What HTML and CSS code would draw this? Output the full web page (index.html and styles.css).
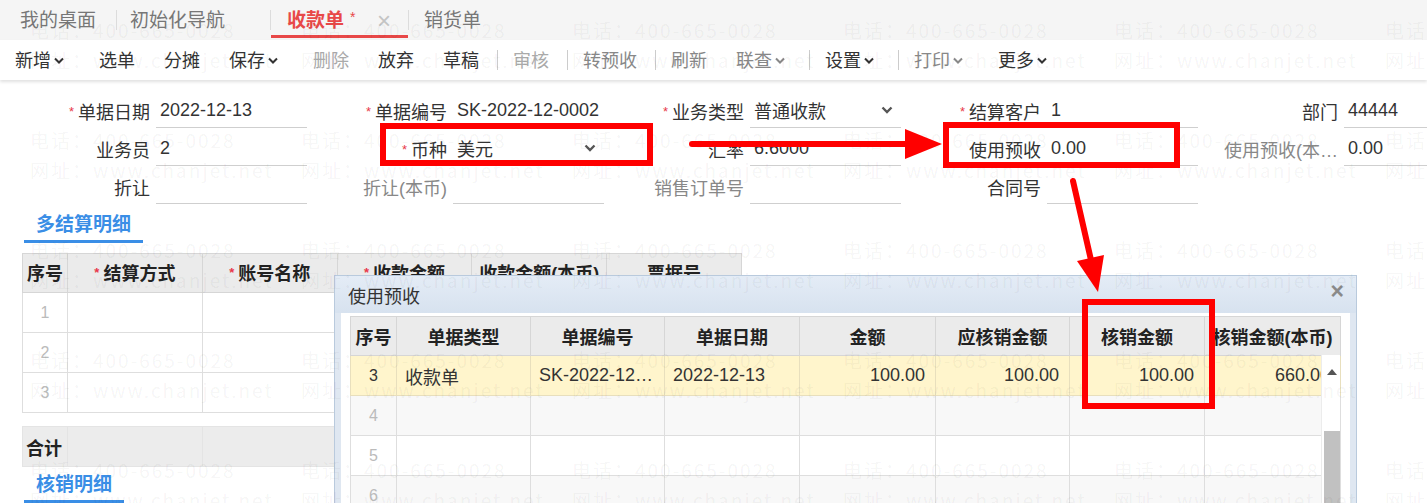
FILE: index.html
```html
<!DOCTYPE html>
<html lang="zh-CN">
<head>
    <meta charset="UTF-8">
    <title>收款单</title>
    <link rel="stylesheet" href="styles.css">
</head>
<body>
<div class="page">
    <div class="tabs">
        <span class="tab tab-desk">我的桌面</span>
        <span class="tab-sep"></span>
        <span class="tab tab-guide">初始化导航</span>
        <span class="tab-sep"></span>
        <span class="tab tab-active">收款单<i class="tab-star">*</i><span class="tab-close">×</span></span>
        <span class="tab-sep"></span>
        <span class="tab tab-sale">销货单</span>
    </div>

    <div class="toolbar">
        <span class="tb dd">新增<svg class="chev" viewBox="0 0 10 7"><path d="M1 1.5L5 5.5L9 1.5"/></svg></span>
        <span class="tb">选单</span>
        <span class="tb">分摊</span>
        <span class="tb dd">保存<svg class="chev" viewBox="0 0 10 7"><path d="M1 1.5L5 5.5L9 1.5"/></svg></span>
        <span class="tb off">删除</span>
        <span class="tb">放弃</span>
        <span class="tb">草稿</span>
        <span class="tb-sep"></span>
        <span class="tb off">审核</span>
        <span class="tb-sep"></span>
        <span class="tb dim">转预收</span>
        <span class="tb-sep"></span>
        <span class="tb dim">刷新</span>
        <span class="tb dd dim">联查<svg class="chev" viewBox="0 0 10 7"><path d="M1 1.5L5 5.5L9 1.5"/></svg></span>
        <span class="tb-sep"></span>
        <span class="tb dd">设置<svg class="chev" viewBox="0 0 10 7"><path d="M1 1.5L5 5.5L9 1.5"/></svg></span>
        <span class="tb-sep"></span>
        <span class="tb dd dim">打印<svg class="chev" viewBox="0 0 10 7"><path d="M1 1.5L5 5.5L9 1.5"/></svg></span>
        <span class="tb dd">更多<svg class="chev" viewBox="0 0 10 7"><path d="M1 1.5L5 5.5L9 1.5"/></svg></span>
    </div>

    <div class="form">
        <div class="fi"><label><span class="req">*</span>单据日期</label><div class="val">2022-12-13</div></div>
        <div class="fi"><label><span class="req">*</span>单据编号</label><div class="val">SK-2022-12-0002</div></div>
        <div class="fi"><label><span class="req">*</span>业务类型</label><div class="val"><span class="txt">普通收款</span><svg class="sel" viewBox="0 0 12 8"><path d="M1.5 1.5L6 6L10.5 1.5"/></svg></div></div>
        <div class="fi"><label><span class="req">*</span>结算客户</label><div class="val">1</div></div>
        <div class="fi"><label>部门</label><div class="val">44444</div></div>

        <div class="fi"><label>业务员</label><div class="val">2</div></div>
        <div class="fi"><label><span class="req">*</span>币种</label><div class="val"><span class="txt">美元</span><svg class="sel" viewBox="0 0 12 8"><path d="M1.5 1.5L6 6L10.5 1.5"/></svg></div></div>
        <div class="fi"><label>汇率</label><div class="val">6.6000</div></div>
        <div class="fi"><label>使用预收</label><div class="val">0.00</div></div>
        <div class="fi"><label class="muted">使用预收(本…</label><div class="val">0.00</div></div>

        <div class="fi"><label>折让</label><div class="val"></div></div>
        <div class="fi"><label class="muted">折让(本币)</label><div class="val"></div></div>
        <div class="fi"><label class="muted">销售订单号</label><div class="val"></div></div>
        <div class="fi"><label>合同号</label><div class="val"></div></div>
        <div class="fi"></div>
    </div>

    <div class="sec-row"><span class="sec">多结算明细</span></div>

    <table class="grid settle">
        <colgroup><col class="c-num"><col><col><col><col><col></colgroup>
        <tr><th>序号</th><th><span class="req">*</span>结算方式</th><th><span class="req">*</span>账号名称</th><th><span class="req">*</span>收款金额</th><th>收款金额(本币)</th><th>票据号</th></tr>
        <tr><td class="num">1</td><td></td><td></td><td></td><td></td><td></td></tr>
        <tr><td class="num">2</td><td></td><td></td><td></td><td></td><td></td></tr>
        <tr><td class="num">3</td><td></td><td></td><td></td><td></td><td></td></tr>
    </table>

    <table class="grid total">
        <colgroup><col class="c-num"><col><col><col><col><col></colgroup>
        <tr><td class="sum">合计</td><td></td><td></td><td></td><td></td><td></td></tr>
    </table>

    <div class="sec-row"><span class="sec sec-low">核销明细</span></div>

    <div class="dialog">
        <div class="dlg-title">使用预收<span class="dlg-close">×</span></div>
        <div class="dlg-body">
            <div class="dlg-grid">
                <table class="grid pick">
                    <colgroup>
                        <col class="p-num"><col class="p-134"><col class="p-134"><col class="p-135">
                        <col class="p-136"><col class="p-134"><col class="p-135"><col class="p-136">
                    </colgroup>
                    <tr><th>序号</th><th>单据类型</th><th>单据编号</th><th>单据日期</th><th>金额</th><th>应核销金额</th><th>核销金额</th><th>核销金额(本币)</th></tr>
                    <tr class="hit"><td class="num">3</td><td>收款单</td><td>SK-2022-12-0002</td><td>2022-12-13</td><td class="r">100.00</td><td class="r">100.00</td><td class="r">100.00</td><td class="r">660.00</td></tr>
                    <tr class="odd"><td class="num">4</td><td></td><td></td><td></td><td></td><td></td><td></td><td></td></tr>
                    <tr><td class="num">5</td><td></td><td></td><td></td><td></td><td></td><td></td><td></td></tr>
                    <tr class="odd"><td class="num">6</td><td></td><td></td><td></td><td></td><td></td><td></td><td></td></tr>
                </table>
                <div class="vscroll"><span class="vs-up"></span><span class="vs-thumb"></span></div>
            </div>
        </div>
    </div>

    <div class="watermark" id="watermark"></div>

    <svg class="marks" viewBox="0 0 1427 503">
        <g fill="none" stroke="#f00" stroke-width="6">
            <rect x="383" y="126" width="267" height="37"/>
            <rect x="946" y="125" width="231" height="40"/>
            <rect x="1085" y="302" width="127" height="104"/>
        </g>
        <g stroke="#f00" stroke-width="6" stroke-linecap="round">
            <line x1="692" y1="144" x2="908" y2="144"/>
            <line x1="1073" y1="181" x2="1091" y2="260"/>
        </g>
        <g fill="#f00">
            <polygon points="905,129 942,144 905,159"/>
            <polygon points="1077,261 1104,255 1098,292"/>
        </g>
    </svg>
</div>

<script>
    var wm = document.getElementById('watermark');
    var html = '';
    for (var i = 0; i < 30; i++) {
        html += '<div class="wm-cell"><div>电话：400-665-0028</div><div>网址：www.chanjet.net</div></div>';
    }
    wm.innerHTML = html;
</script>
</body>
</html>
```

FILE: styles.css
```css
* {
    box-sizing: border-box;
}
body {
    margin: 0;
    font-family: "Liberation Sans", "Noto Sans CJK SC", sans-serif;
    color: #333;
    background: #fff;
}
.page {
    position: relative;
    width: 1427px;
    height: 503px;
    overflow: hidden;
}

/* tabs */
.tabs {
    display: flex;
    align-items: center;
    height: 40px;
    padding-left: 20px;
    background: #f5f5f5;
    font-size: 19px;
    color: #777;
}
.tab {
    line-height: 40px;
    padding-top: 1px;
    white-space: nowrap;
}
.tab-desk {
    margin-right: 20px;
}
.tab-sep {
    width: 1px;
    height: 20px;
    background: #dcdcdc;
}
.tab-guide {
    margin: 0 45px 0 13px;
}
.tab-active {
    position: relative;
    display: flex;
    align-items: center;
    width: 137px;
    padding-left: 16px;
    color: #e84848;
    font-weight: bold;
}
.tab-active::after {
    content: "";
    position: absolute;
    left: 0;
    right: 0;
    bottom: 3px;
    height: 3px;
    background: #e84848;
}
.tab-star {
    font-style: normal;
    font-weight: normal;
    font-size: 14px;
    margin-left: 6px;
    position: relative;
    top: -4px;
}
.tab-close {
    margin-left: auto;
    margin-right: 17px;
    font-size: 24px;
    font-weight: normal;
    color: #c4c4c4;
}
.tab-sale {
    margin-left: 15px;
}

/* toolbar */
.toolbar {
    position: relative;
    z-index: 1;
    display: flex;
    align-items: center;
    height: 40px;
    background: #fff;
    box-shadow: 0 2px 3px rgba(0, 0, 0, 0.12);
}
.tb {
    display: flex;
    align-items: center;
    padding: 1px 14px 0 15px;
    font-size: 18px;
    line-height: 40px;
    color: #333;
    white-space: nowrap;
}
.tb.dd {
    padding-right: 20px;
}
.tb.off {
    color: #aaa;
}
.tb.dim {
    color: #888;
}
.chev {
    width: 10px;
    height: 7px;
    margin-left: 3px;
    fill: none;
    stroke: currentColor;
    stroke-width: 2;
}
.tb-sep {
    width: 1px;
    height: 20px;
    margin-left: 4px;
    background: #ccc;
}

/* header form */
.form {
    display: grid;
    grid-template-columns: repeat(5, 297px);
    margin-top: 10px;
    padding-left: 10px;
}
.fi {
    display: flex;
    align-items: center;
    height: 38px;
}
.fi label {
    width: 140px;
    margin-right: 6px;
    padding-top: 3px;
    text-align: right;
    font-size: 18px;
    color: #333;
    white-space: nowrap;
}
.fi label.muted {
    color: #888;
}
.req {
    position: relative;
    top: -3px;
    margin-right: 4px;
    font-size: 13px;
    color: #e8394a;
}
.val {
    display: flex;
    align-items: center;
    flex: none;
    width: 151px;
    height: 38px;
    padding: 3px 0 0 4px;
    border-bottom: 1px solid #cfcfcf;
    font-size: 18px;
    color: #333;
    white-space: nowrap;
}
.val .txt {
    flex: 1;
}
.sel {
    width: 12px;
    height: 8px;
    margin-right: 8px;
    fill: none;
    stroke: #555;
    stroke-width: 2.4;
}

/* section tabs */
.sec-row {
    padding-left: 24px;
}
.sec {
    display: inline-block;
    padding: 6px 12px 0;
    line-height: 30px;
    font-size: 19px;
    font-weight: bold;
    color: #3a8ee6;
    border-bottom: 3px solid #3a8ee6;
}
.sec-low {
    padding-top: 3px;
}

/* grids */
.grid {
    border-collapse: collapse;
    table-layout: fixed;
    font-size: 18px;
}
.grid th {
    height: 39px;
    padding: 0;
    background: #ebebeb;
    border: 1px solid #d6d6d6;
    font-weight: bold;
    color: #222;
    text-align: center;
    white-space: nowrap;
}
.settle th {
    padding-bottom: 3px;
}
.grid td {
    height: 40px;
    padding: 0 8px;
    border: 1px solid #dedede;
    white-space: nowrap;
    overflow: hidden;
    text-overflow: ellipsis;
}
.grid td.num {
    padding: 0;
    text-align: center;
    font-size: 16px;
    color: #bbb;
}
.grid td.r {
    text-align: right;
    padding-right: 10px;
}
.settle,
.total {
    width: 720px;
    margin-left: 22px;
}
.settle {
    margin-top: 10px;
}
.c-num {
    width: 45px;
}
.total {
    margin-top: 13px;
}
.total td {
    background: #ececec;
    border-color: #e4e4e4;
}
.total td.sum {
    padding: 0 3px;
    font-weight: bold;
    color: #222;
}

/* dialog */
.dialog {
    position: absolute;
    left: 334px;
    top: 275px;
    width: 1023px;
    height: 250px;
    border: 1px solid #b9cadd;
    background: #dfe7f1;
    z-index: 2;
}
.dlg-title {
    display: flex;
    align-items: center;
    height: 37px;
    padding: 0 12px 0 13px;
    background: linear-gradient(#e4ecf6, #d7e2ef);
    font-size: 18px;
    color: #333;
}
.dlg-close {
    margin-left: auto;
    margin-top: -6px;
    font-size: 23px;
    font-weight: bold;
    color: #8a8a8a;
}
.dlg-body {
    height: 220px;
    margin: 0 6px;
    padding: 3px 10px 0 9px;
    background: #fff;
}
.dlg-grid {
    position: relative;
    width: 990px;
}
.pick {
    width: 990px;
}
.p-num { width: 46px; }
.p-134 { width: 134px; }
.p-135 { width: 135px; }
.p-136 { width: 136px; }
.pick tr.hit td {
    background: #fff5cc;
    border-color: #e8dfbd;
    color: #333;
}
.pick tr.hit td.num {
    color: #333;
}
.pick tr.odd td {
    background: #f8f8f8;
}
.vscroll {
    position: absolute;
    right: 0;
    top: 39px;
    bottom: 0;
    width: 19px;
    background: #fff;
    border-left: 1px solid #ececec;
}
.vs-up {
    position: absolute;
    left: 5px;
    top: 14px;
    border-left: 5px solid transparent;
    border-right: 5px solid transparent;
    border-bottom: 6px solid #555;
}
.vs-thumb {
    position: absolute;
    left: 2px;
    top: 76px;
    width: 16px;
    height: 200px;
    background: #c1c1c1;
}

/* watermark */
.watermark {
    position: absolute;
    left: 0;
    top: 0;
    z-index: 5;
    display: grid;
    grid-template-columns: repeat(6, 271px);
    grid-auto-rows: 110px;
    padding: 15px 0 0 30px;
    pointer-events: none;
    font-family: "Noto Sans CJK SC", sans-serif;
    font-size: 19px;
    letter-spacing: 2px;
    line-height: 30px;
    color: rgba(0, 0, 0, 0.05);
    white-space: nowrap;
}

.marks {
    position: absolute;
    left: 0;
    top: 0;
    width: 1427px;
    height: 503px;
    z-index: 6;
    pointer-events: none;
}
```
